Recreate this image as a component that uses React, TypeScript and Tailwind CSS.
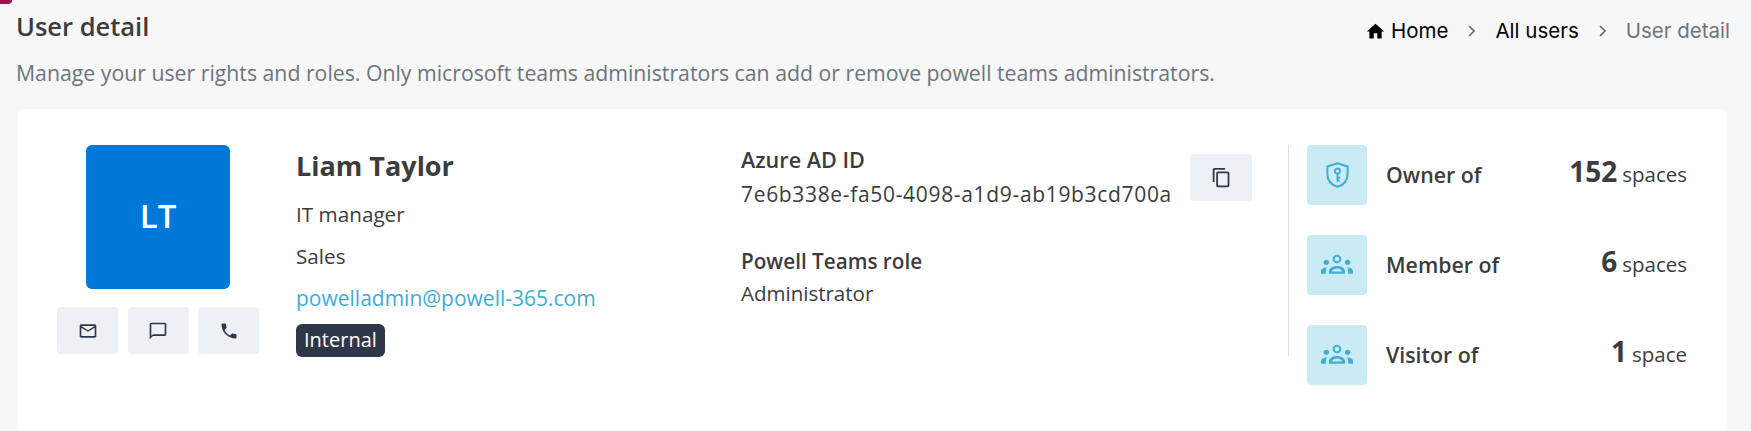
const labelFont = "font-['Open_Sans','Liberation_Sans',sans-serif]";

function Icon({ d, className }: { d: string; className: string }) {
  return (
    <svg viewBox="0 0 24 24" fill="currentColor" className={className}>
      <path d={d} />
    </svg>
  );
}

function ShieldKeyIcon() {
  return (
    <svg viewBox="0 0 24 24" fill="none" stroke="currentColor" className="w-[27px] h-[30px] text-[#40aed4]">
      <path strokeWidth={1.8} strokeLinejoin="round" d="M12 1.5 21 4.5V11c0 5.6-3.7 9.8-9 11.5C6.700 20.800 3 16.600 3 11V4.500z" />
      <circle cx="12" cy="8.500" r="2.300" strokeWidth={1.700} />
      <path strokeWidth={1.700} d="M12 10.800V18M12 14.500h2.500M12 17h2" />
    </svg>
  );
}

function GroupIcon() {
  return (
    <svg viewBox="0 0 24 24" fill="currentColor" className="w-[32px] h-[32px] text-[#40aed4]">
      <circle cx="4" cy="10" r="2" />
      <circle cx="20" cy="10" r="2" />
      <circle cx="12" cy="7.500" r="2.500" fill="none" stroke="currentColor" strokeWidth={1.500} />
      <path d="M0 18.500v-2c0-1.300 1.500-2.700 4.500-2.800-.6.800-.9 2.200-.9 4.800zM24 18.500v-2c0-1.300-1.500-2.700-4.500-2.800.6.800.9 2.200.9 4.800z" />
      <path d="M6 18.500v-2c0-2.100 2.700-3.700 6-3.700s6 1.600 6 3.700v2zm2-1.700h8c-.3-1-2-2.200-4-2.200s-3.700 1.200-4 2.200z" fillRule="evenodd" />
    </svg>
  );
}

function Chevron() {
  return (
    <svg viewBox="0 0 7 12" fill="none" stroke="currentColor" className="w-[7px] h-[12px] mx-[20px] text-[#5b6b7a]">
      <path strokeWidth={1.6} d="M1 1l5 5-5 5" />
    </svg>
  );
}

function ActionButton({ d }: { d: string }) {
  return (
    <button className="w-[61px] h-[47px] rounded-[4px] bg-[#edf0f5] flex items-center justify-center text-[#2d3748]">
      <Icon d={d} className="w-[20px] h-[20px]" />
    </button>
  );
}

function StatRow({ icon, label, count, unit }: { icon: React.ReactNode; label: string; count: number; unit: string }) {
  return (
    <div className="flex items-center h-[60px]">
      <div className="w-[60px] h-[60px] rounded-[4px] bg-[#cbebf4] flex items-center justify-center shrink-0">{icon}</div>
      <span className="ml-[19px] text-[21.3px] font-semibold text-[#3c3c3c]">{label}</span>
      <span className="ml-auto mb-[8px] text-[#3c3c3c] text-[20.5px]">
        <span className="text-[28px] font-bold mr-[5px]">{count}</span>
        {unit}
      </span>
    </div>
  );
}

export default function App() {
  return (
    <div className={`relative w-[1751px] h-[431px] overflow-hidden bg-[#f7f7f7] ${labelFont}`}>
      {/* corner of the app logo, cut off by the frame */}
      <div className="absolute left-0 top-0 w-[12px] h-[4px] rounded-br-[4px] bg-[#a3114f]" />

      <div className="pl-[16px] pr-[21px] pt-[10px]">
        <div className="flex items-start justify-between">
          <h1 className="text-[25.5px] leading-[32px] font-semibold text-[#3c3c3c]">User detail</h1>
          <nav className="flex items-center pt-[8px] text-[20.5px] leading-[26px] font-['Inter','Liberation_Sans',sans-serif]">
            <Icon d="M10 20v-6h4v6h5v-8h3L12 3 2 12h3v8z" className="w-[21px] h-[21px] text-black mr-[5px]" />
            <span className="text-black">Home</span>
            <Chevron />
            <span className="text-black">All users</span>
            <Chevron />
            <span className="text-[#6c757d]">User detail</span>
          </nav>
        </div>
        <p className="mt-[15px] text-[21.25px] leading-[28px] text-[#6c757d]">
          Manage your user rights and roles. Only microsoft teams administrators can add or remove powell teams administrators.
        </p>
      </div>

      <div className="ml-[18px] mr-[24px] mt-[22px] h-[340px] rounded-[6px] bg-white flex pt-[36px] text-[#3c3c3c]">
        <div className="w-[278px] pl-[39px] flex flex-col items-start shrink-0">
          <div className="ml-[29px] w-[144px] h-[144px] pb-[3px] rounded-[6px] bg-[#0078d7] flex items-center justify-center text-white text-[33px] font-semibold">
            LT
          </div>
          <div className="mt-[18px] flex gap-[9.5px]">
            <ActionButton d="M20 4H4c-1.100 0-1.990.9-1.990 2L2 18c0 1.100.9 2 2 2h16c1.100 0 2-.9 2-2V6c0-1.100-.9-2-2-2zm0 14H4V8l8 5 8-5v10zm-8-7L4 6h16l-8 5z" />
            <ActionButton d="M20 2H4c-1.100 0-2 .9-2 2v18l4-4h14c1.100 0 2-.9 2-2V4c0-1.100-.9-2-2-2zm0 14H6l-2 2V4h16v12z" />
            <ActionButton d="M6.620 10.790c1.440 2.830 3.760 5.140 6.590 6.590l2.200-2.200c.27-.27.67-.36 1.020-.24 1.120.37 2.330.57 3.570.57.55 0 1 .45 1 1V20c0 .55-.45 1-1 1-9.390 0-17-7.610-17-17 0-.55.45-1 1-1h3.500c.55 0 1 .45 1 1 0 1.250.2 2.450.57 3.570.11.35.03.74-.25 1.020l-2.200 2.200z" />
          </div>
        </div>

        <div className="w-[445px] shrink-0 flex flex-col items-start pt-[2px]">
          <h2 className="text-[27px] leading-[38px] font-bold">Liam Taylor</h2>
          <p className="mt-[16px] text-[20.7px] leading-[26px]">IT manager</p>
          <p className="mt-[16px] text-[20.7px] leading-[26px]">Sales</p>
          <p className="mt-[16px] text-[21px] leading-[26px] text-[#40aed4]">powelladmin@powell-365.com</p>
          <span className="mt-[13px] h-[33px] px-[8px] rounded-[6px] bg-[#2d3748] text-white text-[20px] leading-[31px]">Internal</span>
        </div>

        <div className="w-[449px] shrink-0 pt-[2px]">
          <p className="text-[21.6px] leading-[26px] font-semibold">Azure AD ID</p>
          <p className="mt-[8px] text-[21px] leading-[26px] tracking-[0.67px]">7e6b338e-fa50-4098-a1d9-ab19b3cd700a</p>
          <p className="mt-[41px] text-[20.7px] leading-[26px] font-semibold">Powell Teams role</p>
          <p className="mt-[6px] text-[20.5px] leading-[26px]">Administrator</p>
        </div>
        <button className="mt-[9px] w-[62px] h-[47px] rounded-[4px] bg-[#edf0f5] flex items-center justify-center text-[#2d3748] shrink-0">
          <Icon d="M16 1H4c-1.100 0-2 .9-2 2v14h2V3h12V1zm3 4H8c-1.100 0-2 .9-2 2v14c0 1.100.9 2 2 2h11c1.100 0 2-.9 2-2V7c0-1.100-.9-2-2-2zm0 16H8V7h11v14z" className="w-[21px] h-[21px]" />
        </button>

        <div className="w-[1px] h-[211px] bg-[#dedede] ml-[36px] mr-[18px] shrink-0" />

        <div className="w-[380px] flex flex-col gap-[30px]">
          <StatRow icon={<ShieldKeyIcon />} label="Owner of" count={152} unit="spaces" />
          <StatRow icon={<GroupIcon />} label="Member of" count={6} unit="spaces" />
          <StatRow icon={<GroupIcon />} label="Visitor of" count={1} unit="space" />
        </div>
      </div>
    </div>
  );
}
